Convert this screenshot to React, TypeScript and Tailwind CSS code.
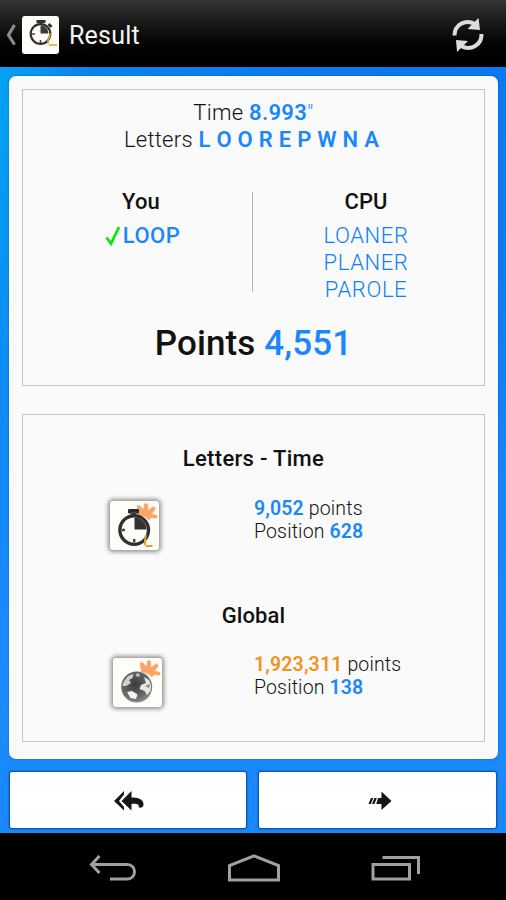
import type { ReactNode } from "react";

const cpuWords = ["LOANER", "PLANER", "PAROLE"];

function Crown() {
  return (
    <path
      d="M27 5 L29.500 4.500 L33.500 9 L34.500 3 L37.500 2.800 L38 9.500 L43.500 5.500 L45.500 7.500 L41.500 13 L47 14.500 V17 L40.500 16.800 L39 19 C36.500 16 33 14.200 28.500 14 Z"
      fill="#f9a566"
      stroke="#f9a566"
      strokeWidth="0.6"
      strokeLinejoin="round"
    />
  );
}

function StopwatchIcon() {
  return (
    <svg viewBox="0 0 49 49" className="h-full w-full">
      <Crown />
      <rect x="18" y="8" width="11" height="4.500" rx="1" fill="#2b2b2b" />
      <rect x="21" y="11" width="5" height="5" fill="#444" />
      <circle cx="24.200" cy="29" r="14.300" fill="#fffdfa" stroke="#303030" strokeWidth="3.4" />
      <path d="M24.500 28.500 V16.500 A12 12 0 0 1 36.500 28.500 Z" fill="#333" />
      <path d="M12 29 h3 M24.200 38 v3" stroke="#444" strokeWidth="2.4" />
      <path d="M36 34 L35 39 V44 M35.500 45 h7" stroke="#dba23c" strokeWidth="2" fill="none" />
    </svg>
  );
}

function GlobeIcon() {
  return (
    <svg viewBox="0 0 49 49" className="h-full w-full">
      <defs>
        <radialGradient id="globe" cx="0.45" cy="0.4" r="0.65">
          <stop offset="0" stopColor="#3a3a3a" />
          <stop offset="0.7" stopColor="#6a6a6a" />
          <stop offset="1" stopColor="#999" />
        </radialGradient>
      </defs>
      <circle cx="23.700" cy="29" r="15.500" fill="url(#globe)" />
      <path d="M10.500 24 L15 18 L20.500 16 L19.500 20 L16 22 L18 25 L13 28 L9.500 28 Z" fill="#d0d0d0" />
      <path d="M14 34 L19 33 L24.500 36.500 L23 41 L17.500 40 Z" fill="#f4f4f4" />
      <path d="M24 15 L27 16 L26 19 L22.500 18 Z" fill="#bbb" />
      <path d="M31 19 L36 22 L38 27 L37.500 33 L34 37 L31.500 33 L26.500 31 L28 27 L33 25 Z" fill="#e6e6e6" />
      <path d="M32 28 L37 26 L36 30 Z" fill="#888" />
      <Crown />
    </svg>
  );
}

function Tile({ children, className = "" }: { children: ReactNode; className?: string }) {
  return (
    <div className={`size-[49px] rounded-[3px] bg-[#fffdf8] shadow-[0_0_4px_2px_rgba(0,0,0,0.42)] ${className}`}>
      {children}
    </div>
  );
}

function Header() {
  return (
    <header className="flex h-[67px] shrink-0 items-center bg-gradient-to-b from-[#343434] to-black pr-[22px] pt-[2px]">
      <svg viewBox="0 0 12 24" className="ml-[5px] h-6 w-3" fill="none" stroke="#8c8c8c" strokeWidth="3.2">
        <path d="M9.500 2 L3.500 12 L9.500 21.500" />
      </svg>
      <div className="ml-[5px] h-[38px] w-[37px] rounded-[3px] bg-[#fffdf8]">
        <svg viewBox="0 0 37 38" className="h-full w-full">
          <path d="M14.500 5.500 h9 M19 5 v5 M26.500 8 l3 3" stroke="#333" strokeWidth="3" />
          <circle cx="18.500" cy="18" r="9.800" fill="#fffdf8" stroke="#303030" strokeWidth="2.200" />
          <path d="M18.500 17.500 V9.500 A8 8 0 0 1 26.500 17.500 Z" fill="#3b3b3b" />
          <path d="M10 18 h3 M18.500 24 v3" stroke="#444" strokeWidth="1.500" />
          <path d="M28 17 A9.500 9.500 0 0 1 26 24 V28 M27 29 h8" stroke="#dba23c" strokeWidth="1.500" fill="none" />
        </svg>
      </div>
      <h1 className="ml-[10px] flex-1 pt-px text-[25px] font-normal leading-none tracking-[0.2px] text-[#f4f4f4]">Result</h1>
      <svg viewBox="0 0 32 36" className="h-9 w-8" fill="none" stroke="#dcdcdc" strokeWidth="4">
        <path d="M2.500 18.500 C2.500 8 13 1.500 23 7" />
        <path d="M29.500 17 C30 27.500 19 34.500 9 29" />
        <path d="M26.500 1 L28 13 L15.500 12 Z M5 35 L4 23 L16 24 Z" fill="#dcdcdc" stroke="none" />
      </svg>
    </header>
  );
}

function Score({ icon, points, pointsColor, position }: { icon: ReactNode; points: string; pointsColor: string; position: string }) {
  return (
    <div className="flex">
      <div className="w-[231px] shrink-0">{icon}</div>
      <div className="text-[19.5px] font-light leading-[23px] tracking-[0.15px] text-[#111]">
        <p>
          <b className={`font-semibold ${pointsColor}`}>{points}</b> points
        </p>
        <p>
          Position <b className="font-semibold text-[#1a88fb]">{position}</b>
        </p>
      </div>
    </div>
  );
}

export default function App() {
  return (
    <div className="flex h-[900px] w-[506px] flex-col overflow-hidden bg-black font-['Roboto',sans-serif] text-[#111]">
      <Header />

      <main className="flex h-[766px] flex-col bg-[linear-gradient(100deg,#06a2f4_0%,#0a84ec_14%,#0a78ee_60%,#0a7cf4_100%)]">
        <div className="flex flex-1 flex-col bg-[linear-gradient(to_bottom,transparent_0%,transparent_20%,#1a8bff_75%,#1a88fa_100%)] pl-[9px] pr-[8px] pt-[9px]">
          <div className="flex h-[683px] shrink-0 flex-col rounded-[7px] bg-[#fafafa] px-[13px] pt-[13px] shadow-[0_0_2px_0_rgba(0,40,90,0.5)]">
            <section className="h-[297px] border border-[#c4c4c4] text-center text-[22px] leading-[27px]">
              <p className="mt-[9px] font-light tracking-[0.3px]">
                Time <b className="font-semibold text-[#1a88fb]">8.993<span className="font-light">"</span></b>
              </p>
              <p className="pr-[4px] font-light tracking-[0.27px]">
                Letters <b className="font-semibold text-[#1a88fb]">L O O R E P W N A</b>
              </p>

              <div className="mt-[39px] flex h-[100px]">
                <div className="w-[229px] pl-[7px]">
                  <h2 className="-mt-1 font-medium tracking-[0.2px]">You</h2>
                  <p className="mt-[7px] flex items-center justify-center pl-[3px] font-medium tracking-[0.5px] text-[#1a88fb]">
                    <svg viewBox="0 0 16 22" className="h-[22px] w-4" fill="none" stroke="#0be60b" strokeWidth="2.800">
                      <path d="M1.500 12.500 L6 18.500 L14 2" />
                    </svg>
                    <span className="ml-[2px]">LOOP</span>
                  </p>
                </div>
                <div className="w-px bg-[#b5b5b5]" />
                <div className="flex-1 pr-[5px]">
                  <h2 className="-mt-1 font-medium">CPU</h2>
                  <ul className="mt-[7px] font-light tracking-[0.6px] text-[#0d80fa]">
                    {cpuWords.map((word) => (
                      <li key={word}>{word}</li>
                    ))}
                  </ul>
                </div>
              </div>

              <p className="mt-[32px] text-[35px] font-medium leading-[40px] tracking-[0.1px]">
                Points <span className="text-[#1a88fb]">4,551</span>
              </p>
            </section>

            <section className="mt-[28px] h-[328px] border border-[#c4c4c4] text-center">
              <h2 className="mt-[31px] text-[22px] font-medium leading-[26px] tracking-[0.3px]">Letters - Time</h2>
              <div className="mt-[25px] text-left">
                <Score icon={<Tile className="ml-[87px] mt-[4px]"><StopwatchIcon /></Tile>} points="9,052" pointsColor="text-[#1a88fb]" position="628" />
              </div>
              <h2 className="mt-[53px] text-[22px] font-medium leading-[26px] tracking-[0.1px]">Global</h2>
              <div className="mt-[24px] text-left">
                <Score icon={<Tile className="ml-[90px] mt-[5px]"><GlobeIcon /></Tile>} points="1,923,311" pointsColor="text-[#f3921e]" position="138" />
              </div>
            </section>
          </div>

          <div className="mt-[13px] flex gap-[13px] pl-px">
            <button className="flex h-[56px] w-[236px] items-center justify-center rounded-[2px] bg-white pl-[3px] pt-[2px] shadow-[0_0_2px_1px_rgba(0,40,90,0.65)]">
              <svg viewBox="0 0 31 20" className="h-5 w-[31px]" fill="#161616">
                <path d="M10 0 V3.500 L5 10 L10 16 V19.500 L0 10 Z" />
                <path d="M17.500 0 V6.500 C25 6 30 9 29.500 14 C29 16.500 26 17.500 24.500 16 C26 13 22 12.500 17.500 13 V19.500 L7.500 10 Z" />
              </svg>
            </button>
            <button className="flex h-[56px] w-[237px] items-center justify-center rounded-[2px] bg-white pl-[4px] pt-[2px] shadow-[0_0_2px_1px_rgba(0,40,90,0.65)]">
              <svg viewBox="0 0 25 20" className="h-5 w-6" fill="#161616">
                <path d="M3 7 h2.500 l-2.500 6 h-2.500 Z M6.700 7 h2.500 l-2.500 6 h-2.500 Z M10.500 7 H14 V0 L24.500 10 L14 19.500 V13 H8.500 Z" />
              </svg>
            </button>
          </div>
        </div>
      </main>

      <nav className="flex flex-1 items-center pt-[3px]">
        <svg viewBox="0 0 48 26" className="ml-[89px] h-[26px] w-12" fill="none" stroke="#a0a0a0" strokeWidth="3">
          <path d="M10.500 1 L2.500 9.500 L10.500 18 M3 9.500 H38 C48 9.500 48 24 38 24 H21" />
        </svg>
        <svg viewBox="0 0 54 28" className="ml-[90px] h-7 w-[54px]" fill="none" stroke="#a0a0a0" strokeWidth="3">
          <path d="M2.500 26 V11.500 L27 1.800 L51.500 11.500 V26 Z" />
        </svg>
        <svg viewBox="0 0 50 26" className="ml-[90px] h-[26px] w-[50px]" fill="none" stroke="#a0a0a0" strokeWidth="3">
          <path d="M2 9.500 H38.500 V24 H2 Z M11.500 2.500 H47.500 V19" />
        </svg>
      </nav>
    </div>
  );
}
